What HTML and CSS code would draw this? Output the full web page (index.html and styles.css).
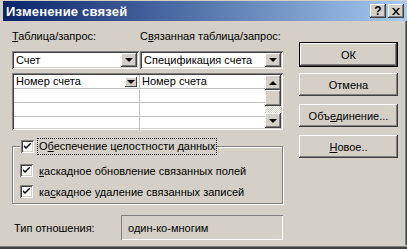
FILE: index.html
```html
<!DOCTYPE html>
<html lang="ru">
<head>
  <meta charset="UTF-8">
  <title>Изменение связей</title>
  <link rel="stylesheet" href="styles.css">
</head>
<body>
  <div class="window">
    <!-- Title bar -->
    <div class="titlebar">
      <span class="title">Изменение связей</span>
      <div class="caption-btns">
        <span class="cbtn help">?</span>
        <span class="cbtn">
          <svg width="8" height="7" viewBox="0 0 8 7"><path d="M0 0h2l2 2.5 2-2.5h2l-3 3.5 3 3.5h-2l-2-2.5-2 2.5h-2l3-3.5z" fill="#000"/></svg>
        </span>
      </div>
    </div>

    <div class="content">
      <div class="main">
        <div class="labels">
          <span class="col-left"><u>Т</u>аблица/запрос:</span>
          <span class="col-right">С<u>в</u>язанная таблица/запрос:</span>
        </div>

        <div class="combos">
          <div class="combo combo-left">
            <span class="combo-text">Счет</span>
            <span class="drop"><span class="arrow-down"></span></span>
          </div>
          <div class="combo combo-right">
            <span class="combo-text">Спецификация счета</span>
            <span class="drop"><span class="arrow-down"></span></span>
          </div>
        </div>

        <div class="grid">
          <div class="grid-rows">
            <div class="row">
              <div class="cell cell-left">Номер счета<span class="mini-drop"><span class="arrow-down"></span></span></div>
              <div class="cell">Номер счета</div>
            </div>
            <div class="row"><div class="cell cell-left"></div><div class="cell"></div></div>
            <div class="row"><div class="cell cell-left"></div><div class="cell"></div></div>
            <div class="row"><div class="cell cell-left"></div><div class="cell"></div></div>
          </div>
          <div class="scrollbar">
            <span class="sb-btn"><span class="arrow-up"></span></span>
            <span class="sb-thumb"></span>
            <span class="sb-track"></span>
            <span class="sb-btn"><span class="arrow-down"></span></span>
          </div>
        </div>

        <fieldset class="group">
          <legend class="group-head">
            <span class="check"><svg width="7" height="7" viewBox="0 0 7 7"><path d="M0 2l2 2 5-5v2l-5 5-2-2z" fill="#000"/></svg></span>
            <span class="focus">О<u>б</u>еспечение целостности данных</span>
          </legend>
          <div class="check-row">
            <span class="check"><svg width="7" height="7" viewBox="0 0 7 7"><path d="M0 2l2 2 5-5v2l-5 5-2-2z" fill="#000"/></svg></span>
            <span><u>к</u>аскадное обновление связанных полей</span>
          </div>
          <div class="check-row">
            <span class="check"><svg width="7" height="7" viewBox="0 0 7 7"><path d="M0 2l2 2 5-5v2l-5 5-2-2z" fill="#000"/></svg></span>
            <span>ка<u>с</u>кадное удаление связанных записей</span>
          </div>
        </fieldset>

        <div class="type-row">
          <span class="type-label">Тип отношения:</span>
          <span class="type-field">один-ко-многим</span>
        </div>
      </div>

      <div class="buttons">
        <span class="btn btn-default">ОК</span>
        <span class="btn">Отмена</span>
        <span class="btn">Объ<u>е</u>динение...</span>
        <span class="btn"><u>Н</u>овое..</span>
      </div>
    </div>
  </div>
</body>
</html>
```

FILE: styles.css
```css
body {
  margin: 0;
  background: #d4d0c8;
  font-family: "Liberation Sans", Arial, sans-serif;
  font-size: 11px;
  color: #000;
}

.window {
  width: 407px;
  height: 249px;
  box-sizing: border-box;
  padding: 1px 0 4px 3px;
  background: #d4d0c8;
  display: flex;
  flex-direction: column;
  box-shadow: inset 0 -1px #404040, inset 0 -2px #404040, inset 0 -3px #808080;
}

u {
  text-decoration: underline;
  text-underline-offset: 1px;
}

/* title bar */
.titlebar {
  height: 20px;
  display: flex;
  align-items: center;
  justify-content: space-between;
  padding: 0 3px 0 3px;
  background: linear-gradient(to right, #0a246a, #a6caf0);
}

.title {
  color: #fff;
  font-weight: bold;
  font-size: 13px;
  letter-spacing: 0.2px;
}

.caption-btns {
  display: flex;
  gap: 2px;
}

.cbtn {
  width: 16px;
  height: 14px;
  box-sizing: border-box;
  display: flex;
  align-items: center;
  justify-content: center;
  background: #d4d0c8;
  font-weight: bold;
  font-size: 12px;
  box-shadow: inset -1px -1px #404040, inset 1px 1px #fff, inset -2px -2px #808080;
}

/* body of the dialog */
.content {
  flex: 1;
  display: flex;
  gap: 16px;
  padding: 9px 0 0 9px;
  box-shadow: inset -1px 0 #404040, inset -2px 0 #808080;
}

.main {
  width: 271px;
  display: flex;
  flex-direction: column;
}

.labels {
  display: flex;
  line-height: 13px;
}

.col-left {
  width: 128px;
}

.combos {
  display: flex;
  gap: 1px;
  margin-top: 8px;
}

.combo {
  height: 18px;
  box-sizing: border-box;
  display: flex;
  align-items: center;
  justify-content: space-between;
  padding: 2px;
  background: #fff;
  box-shadow: inset 1px 1px #808080, inset -1px -1px #fff, inset 2px 2px #404040, inset -2px -2px #d4d0c8;
}

.combo-left {
  width: 127px;
}

.combo-right {
  flex: 1;
}

.combo-text {
  padding-left: 2px;
}

.drop {
  width: 16px;
  height: 14px;
  box-sizing: border-box;
  display: flex;
  align-items: center;
  justify-content: center;
  background: #d4d0c8;
  box-shadow: inset -1px -1px #404040, inset 1px 1px #fff, inset -2px -2px #808080;
}

.arrow-down {
  width: 0;
  height: 0;
  border-left: 4px solid transparent;
  border-right: 4px solid transparent;
  border-top: 4px solid #000;
}

.arrow-up {
  width: 0;
  height: 0;
  border-left: 4px solid transparent;
  border-right: 4px solid transparent;
  border-bottom: 4px solid #000;
}

/* grid */
.grid {
  margin-top: 4px;
  height: 57px;
  box-sizing: border-box;
  padding: 2px;
  display: flex;
  background: #fff;
  overflow: hidden;
  box-shadow: inset 1px 1px #808080, inset -1px -1px #fff, inset 2px 2px #404040, inset -2px -2px #d4d0c8;
}

.grid-rows {
  flex: 1;
}

.row {
  display: flex;
  height: 14px;
  box-sizing: border-box;
  border-bottom: 1px solid #c0c0c0;
}

.cell {
  flex: 1;
  display: flex;
  align-items: center;
  justify-content: space-between;
  padding-left: 2px;
  line-height: 13px;
}

.cell-left {
  flex: none;
  width: 123px;
  border-right: 1px solid #c0c0c0;
}

.mini-drop {
  width: 12px;
  height: 10px;
  margin-right: 2px;
  display: flex;
  align-items: center;
  justify-content: center;
  background: #d4d0c8;
  box-shadow: inset -1px -1px #404040, inset 1px 1px #fff;
}

.scrollbar {
  width: 16px;
  display: flex;
  flex-direction: column;
}

.sb-btn,
.sb-thumb {
  height: 15px;
  flex: none;
  display: flex;
  align-items: center;
  justify-content: center;
  background: #d4d0c8;
  box-shadow: inset -1px -1px #404040, inset 1px 1px #fff, inset -2px -2px #808080;
}

.sb-thumb {
  height: 16px;
}

.sb-track {
  height: 7px;
  flex: none;
  background: repeating-conic-gradient(#fff 0 25%, #d4d0c8 0 50%) 0 0 / 2px 2px;
}

/* group box */
.group {
  margin: 9px 0 0;
  padding: 2px 0 5px 7px;
  border: 1px solid #808080;
  box-shadow: inset 1px 1px #fff, 1px 1px #fff;
  min-width: 0;
}

.group-head {
  display: flex;
  align-items: center;
  gap: 4px;
  padding: 0 1px;
  margin-left: 0;
  background: #d4d0c8;
}

.check {
  width: 13px;
  height: 13px;
  box-sizing: border-box;
  display: flex;
  align-items: center;
  justify-content: center;
  background: #fff;
  box-shadow: inset 1px 1px #808080, inset -1px -1px #fff, inset 2px 2px #404040, inset -2px -2px #d4d0c8;
}

.focus {
  padding: 1px 1px;
  outline: 1px dotted #000;
  outline-offset: 0;
  line-height: 13px;
}

.check-row {
  display: flex;
  align-items: center;
  gap: 6px;
  height: 13px;
  margin-top: 8px;
}

/* relationship type */
.type-row {
  display: flex;
  align-items: center;
  margin-top: 11px;
}

.type-label {
  width: 107px;
  padding-left: 2px;
}

.type-field {
  flex: 1;
  height: 25px;
  box-sizing: border-box;
  display: flex;
  align-items: center;
  padding-left: 7px;
  box-shadow: inset 1px 1px #808080, inset -1px -1px #fff;
}

/* buttons */
.buttons {
  width: 99px;
  padding-top: 12px;
  display: flex;
  flex-direction: column;
  gap: 8px;
}

.btn {
  height: 23px;
  box-sizing: border-box;
  display: flex;
  align-items: center;
  justify-content: center;
  background: #d4d0c8;
  box-shadow: inset -1px -1px #404040, inset 1px 1px #fff, inset -2px -2px #808080;
}

.btn-default {
  height: 25px;
  margin-bottom: -2px;
  box-shadow: inset 0 0 0 1px #000, inset -2px -2px #404040, inset 2px 2px #fff, inset -3px -3px #808080;
}
```
